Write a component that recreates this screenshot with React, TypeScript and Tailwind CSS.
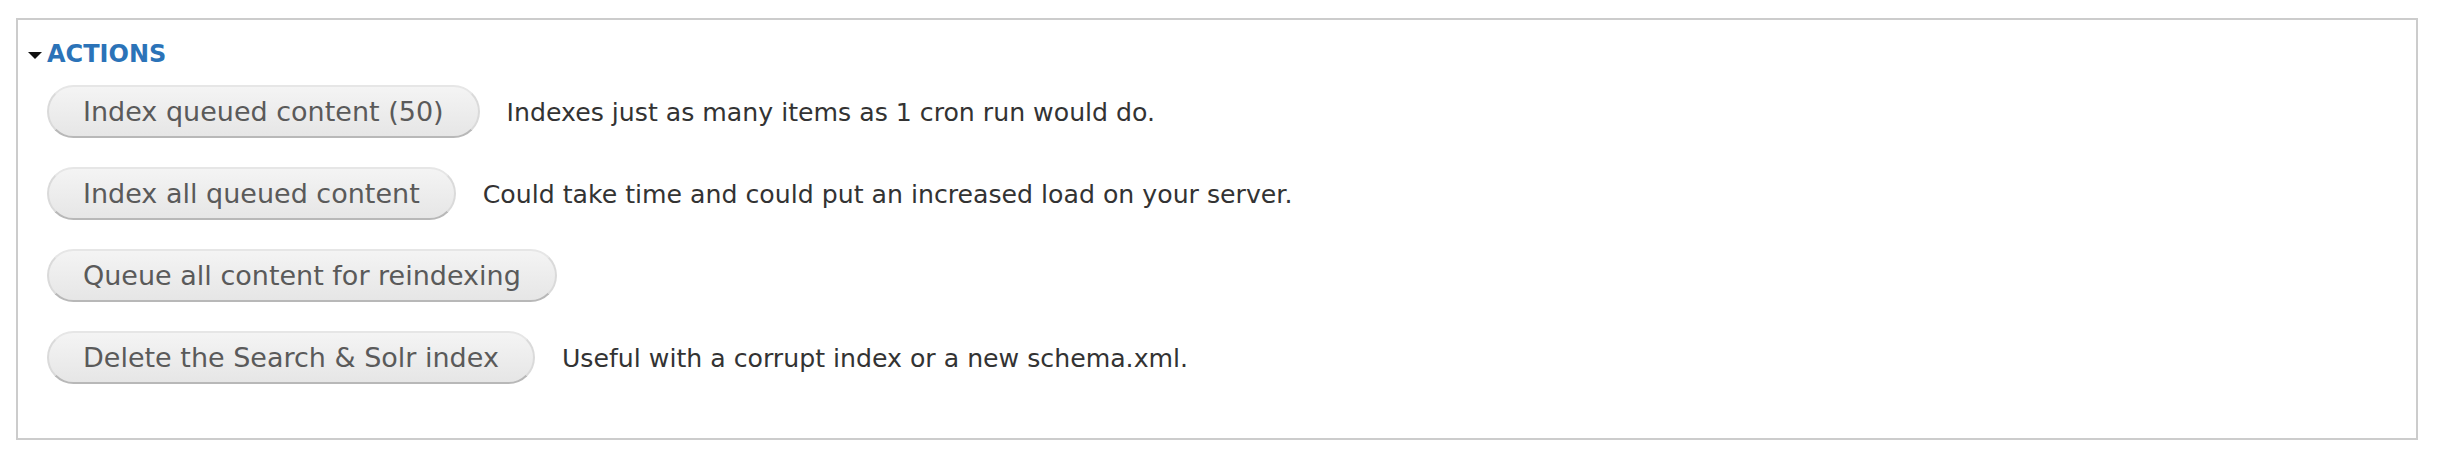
const ACTIONS: { label: string; description?: string }[] = [
  { label: "Index queued content (50)", description: "Indexes just as many items as 1 cron run would do." },
  { label: "Index all queued content", description: "Could take time and could put an increased load on your server." },
  { label: "Queue all content for reindexing" },
  { label: "Delete the Search & Solr index", description: "Useful with a corrupt index or a new schema.xml." },
];

function ActionButton({ label }: { label: string }) {
  return (
    <button
      type="button"
      className="flex h-[53px] shrink-0 items-center rounded-full border-2 border-[#dadada] border-b-[#b8b8b8] border-t-[#e6e6e6] bg-gradient-to-b from-[#f4f4f4] to-[#e6e6e6] px-[34px] text-[27px] leading-none text-[#5a5a5a]"
    >
      {label}
    </button>
  );
}

export default function App() {
  return (
    <div className="min-h-[462px] bg-white px-[16px] pt-[18px] font-['DejaVu_Sans',sans-serif]">
      <div className="h-[422px] w-[2402px] border-2 border-[#cccccc] bg-white">
        {/* legend */}
        <div className="flex items-center gap-[5px] pl-[10px] pt-[20px]">
          <svg width="14" height="7" viewBox="0 0 14 7" className="mt-[2px]">
            <polygon points="0,0 14,0 7,7" fill="#111" />
          </svg>
          <span className="text-[24px] font-bold uppercase leading-[28px] text-[#2b73b8]">Actions</span>
        </div>

        <div className="flex flex-col gap-[29px] pl-[29px] pt-[17px]">
          {ACTIONS.map((a) => (
            <div key={a.label} className="flex items-center gap-[27px]">
              <ActionButton label={a.label} />
              {a.description && (
                <span className="pt-[3px] text-[25.2px] leading-none text-[#333333]">{a.description}</span>
              )}
            </div>
          ))}
        </div>
      </div>
    </div>
  );
}
